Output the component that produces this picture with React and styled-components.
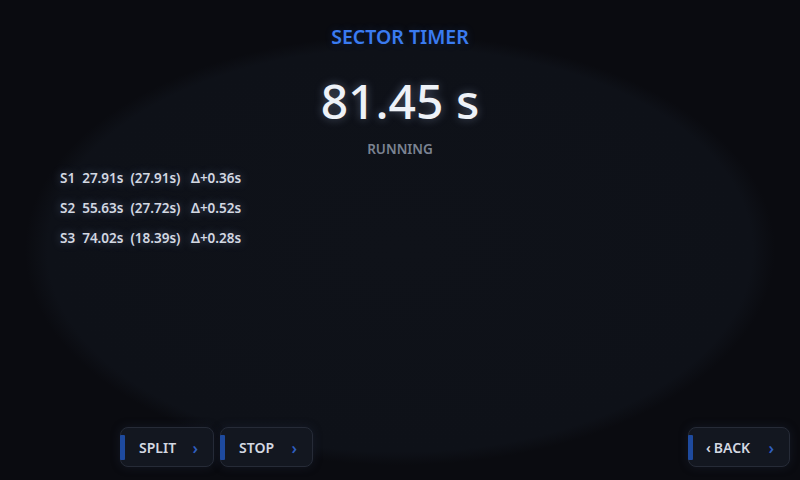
import styled, { createGlobalStyle } from "styled-components";

const GlobalStyle = createGlobalStyle`
  html, body {
    margin: 0;
    padding: 0;
    background: #0a0b10;
  }
  body {
    font-family: "Noto Sans", "Open Sans", sans-serif;
  }
`;

const Screen = styled.div`
  width: 800px;
  height: 480px;
  box-sizing: border-box;
  display: flex;
  flex-direction: column;
  align-items: center;
  padding: 24px 10px 13px;
  background:
    radial-gradient(ellipse 375px 215px at 400px 250px, #0f1219 0%, #0e1118 94%, #0a0b10 100%),
    #0a0b10;
  overflow: hidden;
`;

const Title = styled.div`
  font-size: 19.5px;
  line-height: 26px;
  font-weight: 600;
  color: #3a7bf0;
  text-shadow: 0 0 8px rgba(58, 123, 240, 0.2);
`;

const Clock = styled.div`
  margin-top: 23px;
  font-size: 48px;
  line-height: 56px;
  font-weight: 500;
  color: #eef2f8;
  text-shadow: 0 0 10px rgba(190, 210, 255, 0.35);
`;

const Status = styled.div`
  margin-top: 11px;
  font-size: 13.5px;
  line-height: 18px;
  font-weight: 600;
  color: #7b8392;
`;

const SectorList = styled.div`
  align-self: stretch;
  margin-top: 5px;
  padding-left: 50px;
  display: flex;
  flex-direction: column;
`;

const SectorRow = styled.div`
  font-size: 13.5px;
  line-height: 30px;
  font-weight: 600;
  color: #d3d8e2;
  white-space: pre;
  text-shadow: 0 0 10px rgba(170, 195, 240, 0.4);
`;

const Footer = styled.div`
  margin-top: auto;
  align-self: stretch;
  display: flex;
  align-items: center;
  padding-left: 110px;
`;

const Group = styled.div`
  display: flex;
  gap: 6px;
`;

const Button = styled.button`
  width: ${(p) => p.$w}px;
  height: 40px;
  box-sizing: border-box;
  position: relative;
  display: flex;
  align-items: center;
  justify-content: space-between;
  padding: 0 15px 0 ${(p) => p.$pl}px;
  background: #131720;
  border: 1px solid #262b37;
  border-radius: 8px;
  box-shadow: 0 0 10px rgba(30, 40, 60, 0.45);
  font-family: "Noto Sans", "Open Sans", sans-serif;
  font-size: 14px;
  font-weight: 600;
  color: #d3d8e2;
  cursor: pointer;
  margin-left: ${(p) => (p.$right ? "auto" : "0")};
`;

const Accent = styled.span`
  position: absolute;
  left: -1px;
  top: 7px;
  width: 5px;
  height: 25px;
  background: #1e4a9e;
  border-radius: 1px;
`;

const Label = styled.span`
  display: flex;
  align-items: center;
  gap: 3px;
`;

const Back = styled.span`
  font-size: 14px;
`;

const Chevron = styled.span`
  font-size: 16px;
  line-height: 16px;
  color: #2f5fc0;
  margin-top: 2px;
`;

const sectors = [
  "S1  27.91s  (27.91s)   Δ+0.36s",
  "S2  55.63s  (27.72s)   Δ+0.52s",
  "S3  74.02s  (18.39s)   Δ+0.28s",
];

const App = () => (
  <>
    <GlobalStyle />
    <Screen>
      <Title>SECTOR TIMER</Title>
      <Clock>81.45 s</Clock>
      <Status>RUNNING</Status>
      <SectorList>
        {sectors.map((s) => (
          <SectorRow key={s}>{s}</SectorRow>
        ))}
      </SectorList>
      <Footer>
        <Group>
          <Button $w={94} $pl={18}>
            <Accent />
            <Label>SPLIT</Label>
            <Chevron>›</Chevron>
          </Button>
          <Button $w={93} $pl={18}>
            <Accent />
            <Label>STOP</Label>
            <Chevron>›</Chevron>
          </Button>
        </Group>
        <Button $w={102} $pl={17} $right>
          <Accent />
          <Label>
            <Back>‹</Back>BACK
          </Label>
          <Chevron>›</Chevron>
        </Button>
      </Footer>
    </Screen>
  </>
);

export default App;
